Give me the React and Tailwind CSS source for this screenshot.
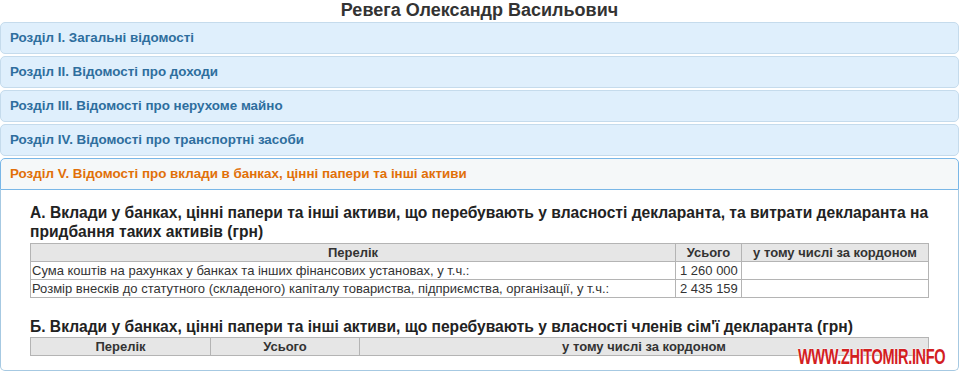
import React from 'react';

const sections = [
  'Розділ I. Загальні відомості',
  'Розділ II. Відомості про доходи',
  'Розділ III. Відомості про нерухоме майно',
  'Розділ IV. Відомості про транспортні засоби',
];

const assetRows = [
  { name: 'Сума коштів на рахунках у банках та інших фінансових установах, у т.ч.:', total: '1 260 000' },
  { name: 'Розмір внесків до статутного (складеного) капіталу товариства, підприємства, організації, у т.ч.:', total: '2 435 159' },
];

const Header = ({ children }) => (
  <div className="mt-[2px] h-[32px] flex items-center pl-[9px] rounded-[5px] border border-[#c5dbec] bg-[#dfeffc] text-[#2e6e9e] text-[13.4px] font-bold">
    {children}
  </div>
);

export default function App() {
  return (
    <div className="w-full bg-white font-['Liberation_Sans',Arial,sans-serif] text-[#222]">
      <h1 className="text-center text-[18px] font-bold leading-[20px] text-[#333]">Ревега Олександр Васильович</h1>

      {/* Accordion */}
      <div>
        {sections.map((s) => (
          <Header key={s}>{s}</Header>
        ))}

        <div className="mt-[2px] h-[32px] flex items-center pl-[9px] rounded-t-[5px] border border-[#79b7e7] bg-[#f5f8f9] text-[#e17009] text-[13.4px] font-bold">
          Розділ V. Відомості про вклади в банках, цінні папери та інші активи
        </div>

        <div className="relative border border-t-0 border-[#a6c9e2] rounded-b-[5px] bg-white px-[29px] pt-[13px] pb-[14px]">
          <h3 className="text-[15.6px] font-bold leading-[19px] text-[#222]">
            А. Вклади у банках, цінні папери та інші активи, що перебувають у власності декларанта, та витрати декларанта на придбання таких активів (грн)
          </h3>
          <table className="mt-[2px] w-full border-collapse text-[13px] leading-[17px] text-[#333]">
            <thead>
              <tr className="bg-[#e6e6e6]">
                <th className="border border-[#b4b4b4] font-bold">Перелік</th>
                <th className="w-[66px] border border-[#b4b4b4] font-bold">Усього</th>
                <th className="w-[187px] border border-[#b4b4b4] font-bold">у тому числі за кордоном</th>
              </tr>
            </thead>
            <tbody>
              {assetRows.map((r) => (
                <tr key={r.name}>
                  <td className="border border-[#b4b4b4] pl-[1px]">{r.name}</td>
                  <td className="border border-[#b4b4b4] pl-[4px]">{r.total}</td>
                  <td className="border border-[#b4b4b4]"></td>
                </tr>
              ))}
            </tbody>
          </table>

          <h3 className="mt-[19px] text-[15.6px] font-bold leading-[19px] text-[#222]">
            Б. Вклади у банках, цінні папери та інші активи, що перебувають у власності членів сім'ї декларанта (грн)
          </h3>
          <table className="mt-[1px] w-full border-collapse text-[13px] leading-[17px] text-[#333]">
            <thead>
              <tr className="bg-[#e6e6e6]">
                <th className="w-[180px] border border-[#b4b4b4] font-bold">Перелік</th>
                <th className="w-[149px] border border-[#b4b4b4] font-bold">Усього</th>
                <th className="border border-[#b4b4b4] font-bold">у тому числі за кордоном</th>
              </tr>
            </thead>
          </table>

          <div className="absolute right-[13px] bottom-[2px] origin-right scale-x-[0.66] text-[#d3201f] text-[22px] font-bold leading-none tracking-[-0.5px] [text-shadow:0_0_2px_#fff,0_0_2px_#fff]">
            WWW.ZHITOMIR.INFO
          </div>
        </div>

        <div className="mt-[2px] h-[6px] rounded-t-[5px] border border-b-0 border-[#c5dbec] bg-[#dfeffc]"></div>
      </div>
    </div>
  );
}
